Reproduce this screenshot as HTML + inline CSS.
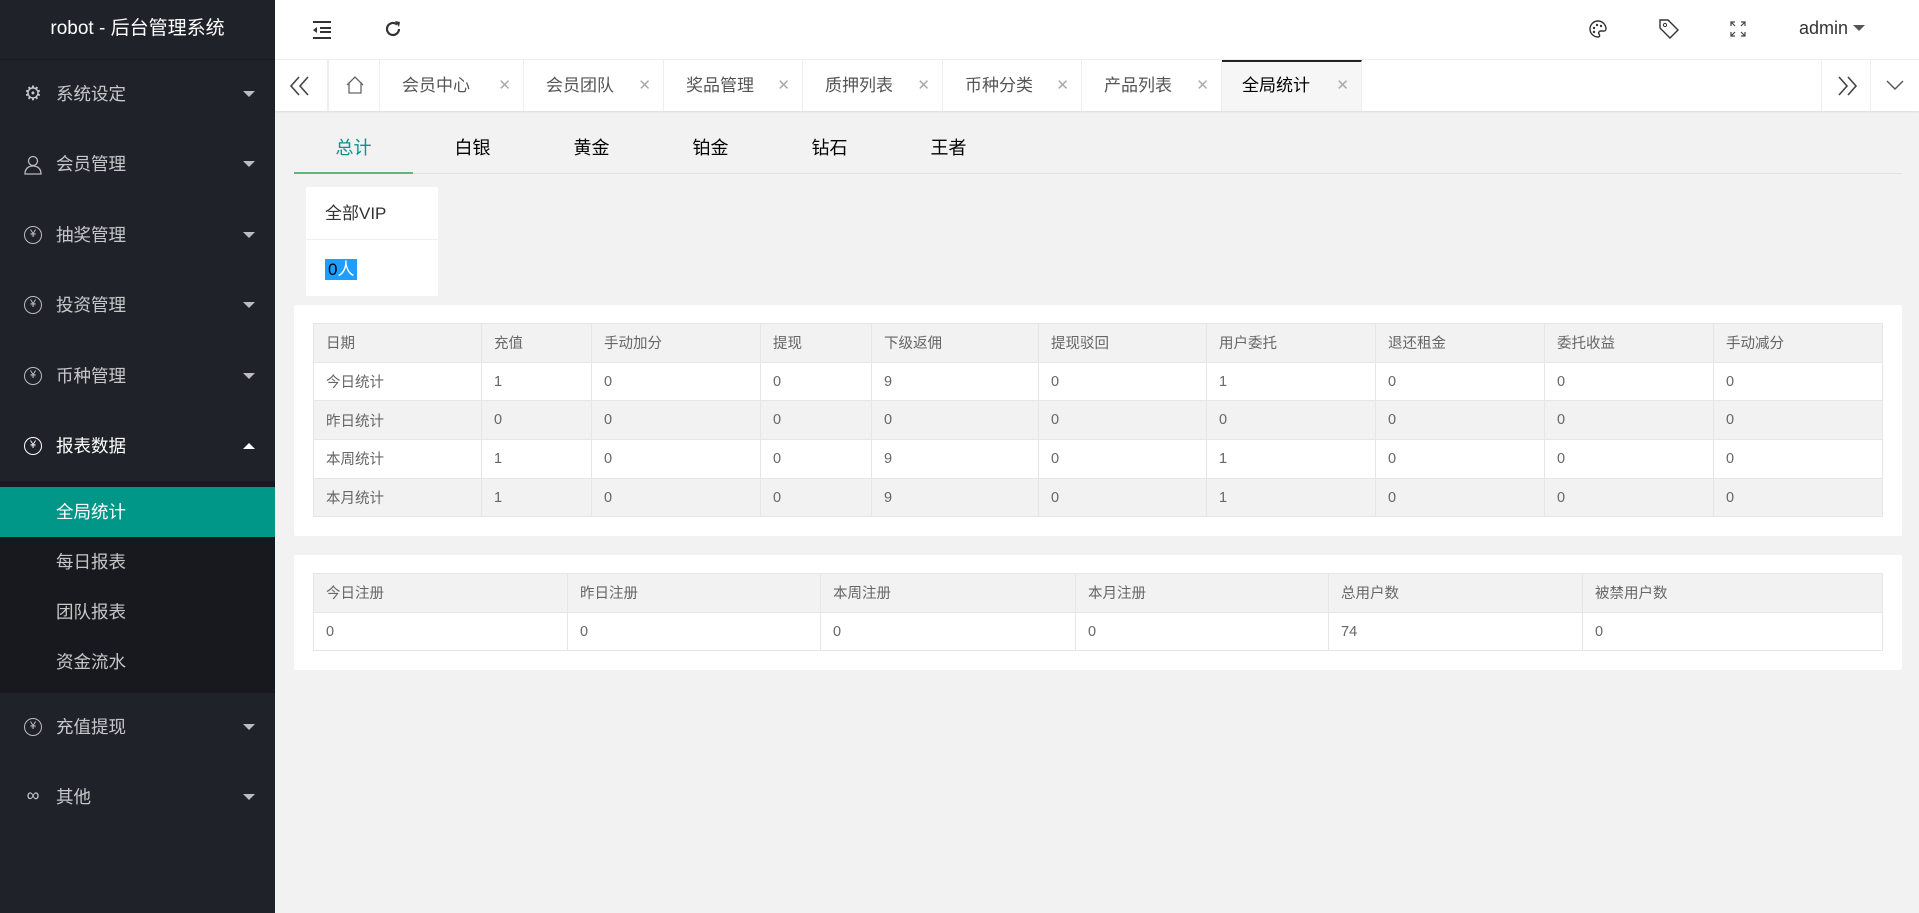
<!DOCTYPE html>
<html><head><meta charset="utf-8"><style>
*{margin:0;padding:0;box-sizing:border-box}
body{width:1919px;height:913px;background:#f2f2f2;font-family:"Liberation Sans","Noto Sans CJK SC",sans-serif;position:relative;overflow:hidden;color:#333}
.abs{position:absolute}
#side{left:0;top:0;width:275px;height:913px;background:#20222a}
#logo{left:0;top:0;width:275px;height:60px;line-height:58px;text-align:center;color:#fff;font-size:19px;border-bottom:1px solid #1a1c22}
.mi{left:0;width:275px;height:70px;line-height:70px;color:rgba(255,255,255,.75);font-size:17.5px}
.mi .t{position:absolute;left:56px}
.mi .ic{position:absolute;left:24px;top:26px;width:18px;height:18px;border:1.3px solid rgba(255,255,255,.7);border-radius:50%;font-size:11px;line-height:15px;text-align:center}
.mi .ar{position:absolute;left:243px;top:32px;width:0;height:0;border-left:6px solid transparent;border-right:6px solid transparent;border-top:6px solid rgba(255,255,255,.7)}
#sub{left:0;top:481px;width:275px;height:212px;background:#18191e}
.si{left:0;width:275px;height:50px;line-height:50px;padding-left:56px;color:rgba(255,255,255,.75);font-size:17.5px}
#hdr{left:275px;top:0;width:1644px;height:60px;background:#fff;border-bottom:1px solid #f0f0f0}
#tabs{left:275px;top:60px;width:1644px;height:51px;background:#fff;box-shadow:0 1px 2px rgba(0,0,0,.1)}
.tb{top:0;height:51px;border-right:1px solid #eee;line-height:51px;font-size:17px;color:#555}
.tb .x{position:absolute;right:12px;color:#aaa;font-size:15px}
table{border-collapse:collapse;position:absolute;font-size:14.5px;color:#666}
td{border:1px solid #e6e6e6;padding:0 0 0 12px;height:38.7px}
tr.g td{background:#f2f2f2}
.card{background:#fff;border-radius:2px}
.tabt{top:134px;font-size:18px;color:#000;width:119px;text-align:center}
</style></head><body>
<div id="side" class="abs">
<div id="logo" class="abs">robot - 后台管理系统</div>
<div class="mi abs" style="top:59px"><span class="ic" style="border:none;font-size:20px;line-height:18px">⚙</span><span class="t">系统设定</span><span class="ar"></span></div>
<div class="mi abs" style="top:129px"><span class="ic" style="border:none"><svg width="18" height="20" viewBox="0 0 18 20"><circle cx="9" cy="6" r="4.5" fill="none" stroke="#bbb" stroke-width="1.3"/><path d="M1 19c0-5 3-8 8-8s8 3 8 8z" fill="none" stroke="#bbb" stroke-width="1.3"/></svg></span><span class="t">会员管理</span><span class="ar"></span></div>
<div class="mi abs" style="top:200px"><span class="ic">¥</span><span class="t">抽奖管理</span><span class="ar"></span></div>
<div class="mi abs" style="top:270px"><span class="ic">¥</span><span class="t">投资管理</span><span class="ar"></span></div>
<div class="mi abs" style="top:341px"><span class="ic">¥</span><span class="t">币种管理</span><span class="ar"></span></div>
<div class="mi abs" style="top:411px;color:#fff"><span class="ic" style="border-color:#fff">¥</span><span class="t">报表数据</span><span class="ar" style="border-top:none;border-bottom:6px solid #fff"></span></div>
<div id="sub" class="abs"></div>
<div class="si abs" style="top:487px;background:#009688;color:#fff">全局统计</div>
<div class="si abs" style="top:537px">每日报表</div>
<div class="si abs" style="top:587px">团队报表</div>
<div class="si abs" style="top:637px">资金流水</div>
<div class="mi abs" style="top:692px"><span class="ic">¥</span><span class="t">充值提现</span><span class="ar"></span></div>
<div class="mi abs" style="top:762px"><span class="ic" style="border:none;font-size:18px">∞</span><span class="t">其他</span><span class="ar"></span></div>
</div>
<div id="hdr" class="abs">
<svg class="abs" style="left:37px;top:21px" width="20" height="18" viewBox="0 0 20 18"><path d="M1 1h18M8 7h11M8 11h11M1 17h18" stroke="#333" stroke-width="2"/><path d="M1 9l4-3v6z" fill="#333"/></svg>
<svg class="abs" style="left:108px;top:19px" width="20" height="20" viewBox="0 0 20 20"><path d="M16 10a6 6 0 1 1-2-4.5" fill="none" stroke="#333" stroke-width="2.2"/><path d="M12 2l5 1-1 5z" fill="#333"/></svg>
<svg class="abs" style="left:1313px;top:19px" width="20" height="20" viewBox="0 0 20 20"><path d="M10 2a8 8 0 0 0 0 16c2 0 2-2 1-3s0-3 2-3h3a2 2 0 0 0 2-2 8 8 0 0 0-8-8z" fill="none" stroke="#333" stroke-width="1.4"/><circle cx="6" cy="9" r="1.2" fill="#333"/><circle cx="9" cy="6" r="1.2" fill="#333"/><circle cx="13" cy="7" r="1.2" fill="#333"/><circle cx="6" cy="13" r="1.2" fill="#333"/></svg>
<svg class="abs" style="left:1383px;top:18px" width="22" height="22" viewBox="0 0 22 22"><path d="M2 2h8l10 10-8 8L2 10z" fill="none" stroke="#333" stroke-width="1.4"/><circle cx="7" cy="7" r="1.6" fill="none" stroke="#333"/></svg>
<svg class="abs" style="left:1455px;top:21px" width="16" height="16" viewBox="0 0 16 16" stroke="#444" stroke-width="1.2" fill="none"><path d="M1 5V1h4M1 1l4 4M11 1h4v4M15 1l-4 4M1 11v4h4M1 15l4-4M15 11v4h-4M15 15l-4-4"/></svg>
<div class="abs" style="left:1524px;top:18px;font-size:18px;color:#333">admin</div>
<div class="abs" style="left:1578px;top:25px;border-left:6px solid transparent;border-right:6px solid transparent;border-top:6px solid #555"></div>
</div>
<div id="tabs" class="abs">
<div class="tb abs" style="left:0;width:53px"><svg style="position:absolute;left:14px;top:16px" width="22" height="20" viewBox="0 0 22 20"><path d="M10 1L2 10l8 9M19 1l-8 9 8 9" fill="none" stroke="#444" stroke-width="1.6"/></svg></div>
<div class="tb abs" style="left:53px;width:52px;border-left:1px solid #eee"><svg style="position:absolute;left:17px;top:16px" width="18" height="18" viewBox="0 0 18 18"><path d="M1 9L9 1l8 8M3 7v10h12V7" fill="none" stroke="#666" stroke-width="1.3"/></svg></div>
<div class="tb abs" style="left:105px;width:144px;padding-left:22px">会员中心<span class="x">✕</span></div>
<div class="tb abs" style="left:249px;width:140px;padding-left:22px">会员团队<span class="x">✕</span></div>
<div class="tb abs" style="left:389px;width:139px;padding-left:22px">奖品管理<span class="x">✕</span></div>
<div class="tb abs" style="left:528px;width:140px;padding-left:22px">质押列表<span class="x">✕</span></div>
<div class="tb abs" style="left:668px;width:139px;padding-left:22px">币种分类<span class="x">✕</span></div>
<div class="tb abs" style="left:807px;width:140px;padding-left:22px">产品列表<span class="x">✕</span></div>
<div class="tb abs" style="left:947px;width:140px;padding-left:20px;background:#f6f6f6;border-top:2px solid #222;color:#000;line-height:47px">全局统计<span class="x">✕</span></div>
<div class="tb abs" style="left:1546px;width:50px;border-left:1px solid #eee"><svg style="position:absolute;left:14px;top:16px" width="22" height="20" viewBox="0 0 22 20"><path d="M3 1l8 9-8 9M12 1l8 9-8 9" fill="none" stroke="#444" stroke-width="1.6"/></svg></div>
<div class="tb abs" style="left:1596px;width:48px;border-right:none"><svg style="position:absolute;left:15px;top:20px" width="18" height="11" viewBox="0 0 18 11"><path d="M1 1l8 8 8-8" fill="none" stroke="#555" stroke-width="1.4"/></svg></div>
</div>
<div class="abs" style="left:294px;top:173px;width:1608px;height:1px;background:#e2e2e2"></div>
<div class="abs" style="left:294px;top:172px;width:119px;height:2px;background:#5fb878"></div>
<div class="tabt abs" style="left:294px;color:#009688">总计</div>
<div class="tabt abs" style="left:413px">白银</div>
<div class="tabt abs" style="left:532px">黄金</div>
<div class="tabt abs" style="left:651px">铂金</div>
<div class="tabt abs" style="left:770px">钻石</div>
<div class="tabt abs" style="left:889px">王者</div>
<div class="card abs" style="left:306px;top:187px;width:132px;height:109px">
<div style="height:53px;line-height:53px;padding-left:19px;font-size:17px;border-bottom:1px solid #f0f0f0">全部VIP</div>
<div style="padding:15px 0 0 19px"><span style="background:#1e9fff;color:#fff;font-size:17px;padding:1px 3px"><span style="color:#000">0</span>人</span></div>
</div>
<div class="card abs" style="left:294px;top:305px;width:1608px;height:231px"></div>
<table style="left:313px;top:323px;width:1570px">
<colgroup><col style="width:168px"><col style="width:110px"><col style="width:169px"><col style="width:111px"><col style="width:167px"><col style="width:168px"><col style="width:169px"><col style="width:169px"><col style="width:169px"><col></colgroup>
<tr class="g"><td>日期</td><td>充值</td><td>手动加分</td><td>提现</td><td>下级返佣</td><td>提现驳回</td><td>用户委托</td><td>退还租金</td><td>委托收益</td><td>手动减分</td></tr>
<tr><td>今日统计</td><td>1</td><td>0</td><td>0</td><td>9</td><td>0</td><td>1</td><td>0</td><td>0</td><td>0</td></tr>
<tr class="g"><td>昨日统计</td><td>0</td><td>0</td><td>0</td><td>0</td><td>0</td><td>0</td><td>0</td><td>0</td><td>0</td></tr>
<tr><td>本周统计</td><td>1</td><td>0</td><td>0</td><td>9</td><td>0</td><td>1</td><td>0</td><td>0</td><td>0</td></tr>
<tr class="g"><td>本月统计</td><td>1</td><td>0</td><td>0</td><td>9</td><td>0</td><td>1</td><td>0</td><td>0</td><td>0</td></tr>
</table>
<div class="card abs" style="left:294px;top:555px;width:1608px;height:115px"></div>
<table style="left:313px;top:573px;width:1570px">
<colgroup><col style="width:254px"><col style="width:253px"><col style="width:255px"><col style="width:253px"><col style="width:254px"><col></colgroup>
<tr class="g"><td>今日注册</td><td>昨日注册</td><td>本周注册</td><td>本月注册</td><td>总用户数</td><td>被禁用户数</td></tr>
<tr><td>0</td><td>0</td><td>0</td><td>0</td><td>74</td><td>0</td></tr>
</table>
</body></html>
